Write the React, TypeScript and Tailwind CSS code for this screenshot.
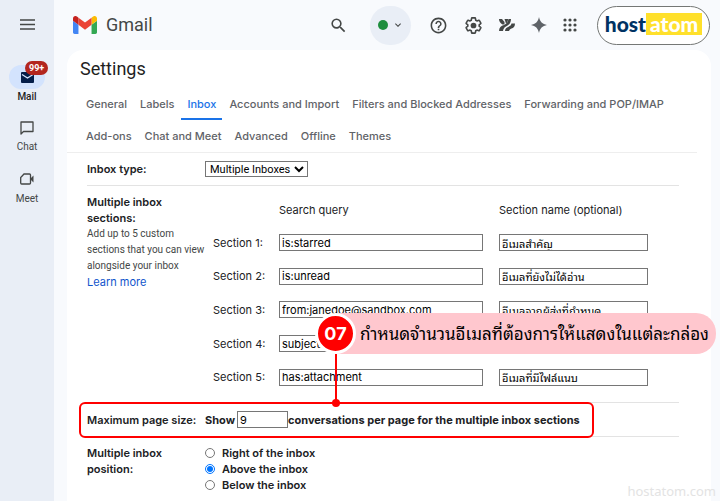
import type { ReactNode } from "react";
import { MdExpandMore, MdHelpOutline, MdSearch } from "react-icons/md";

const tabs = [
  "General",
  "Labels",
  "Inbox",
  "Accounts and Import",
  "Filters and Blocked Addresses",
  "Forwarding and POP/IMAP",
  "Add-ons",
  "Chat and Meet",
  "Advanced",
  "Offline",
  "Themes",
];

const sections = [
  { query: "is:starred", name: "อีเมลสำคัญ" },
  { query: "is:unread", name: "อีเมลที่ยังไม่ได้อ่าน" },
  { query: "from:janedoe@sandbox.com", name: "อีเมลจากผู้ส่งที่กำหนด" },
  { query: "subject:", name: "" },
  { query: "has:attachment", name: "อีเมลที่มีไฟล์แนบ" },
];

const positions = ["Right of the inbox", "Above the inbox", "Below the inbox"];

const GmailLogo = () => (
  <svg className="h-[18px] w-6" viewBox="52 42 88 66" aria-hidden="true">
    <path fill="#4285f4" d="M58 108h14V74L52 59v43c0 3.32 2.69 6 6 6" />
    <path fill="#34a853" d="M120 108h14c3.32 0 6-2.69 6-6V59l-20 15" />
    <path fill="#fbbc04" d="M120 48v26l20-15v-8c0-7.42-8.47-11.65-14.4-7.2" />
    <path fill="#ea4335" d="M72 74V48l24 18 24-18v26L96 92" />
    <path fill="#c5221f" d="M52 51v8l20 15V48l-5.6-4.2c-5.94-4.45-14.4-.22-14.4 7.2" />
  </svg>
);

const MenuIcon = () => (
  <svg className="h-[11px] w-[15px]" viewBox="0 0 15 11" stroke="#444746" strokeWidth="1.5" aria-hidden="true">
    <path d="M0 1h15M0 5.500h15M0 10h15" />
  </svg>
);

const GearIcon = () => (
  <svg className="h-[19px] w-[19px]" viewBox="0 0 24 24" aria-hidden="true">
    <path
      fill="none"
      stroke="#444746"
      strokeWidth="2"
      strokeLinejoin="round"
      d="M19.14 12.94c.04-.3.06-.61.06-.94 0-.32-.02-.64-.07-.94l2.03-1.58c.18-.14.23-.41.12-.61l-1.92-3.32c-.12-.22-.37-.29-.59-.22l-2.39.96c-.5-.38-1.03-.7-1.62-.94l-.36-2.54c-.04-.24-.24-.41-.48-.41h-3.84c-.24 0-.43.17-.47.41l-.36 2.54c-.59.24-1.13.57-1.62.94l-2.39-.96c-.22-.08-.47 0-.59.22L2.74 8.87c-.12.21-.08.47.12.61l2.03 1.58c-.05.3-.09.63-.09.94s.02.64.07.94l-2.03 1.58c-.18.14-.23.41-.12.61l1.92 3.32c.12.22.37.29.59.22l2.39-.96c.5.38 1.03.7 1.62.94l.36 2.54c.05.24.24.41.48.41h3.84c.24 0 .44-.17.47-.41l.36-2.54c.59-.24 1.13-.56 1.62-.94l2.39.96c.22.08.47 0 .59-.22l1.92-3.32c.12-.22.07-.47-.12-.61l-2.01-1.58z"
    />
    <circle cx="12" cy="12" r="3.6" fill="#444746" />
  </svg>
);

const PinwheelIcon = () => (
  <svg className="h-4 w-4" viewBox="0 0 16 16" fill="#444746" aria-hidden="true">
    <path d="M0 2h3L5.500 5V7.500H3.500C1.500 6.500 0 4.500 0 2z" />
    <path d="M5.500 2H9c0 2-.7 3.500-2 4.500C6.500 5 6 3.500 5.500 2z" />
    <path d="M9.500 2H12c0 4-2 6-5 7.500C5 10.500 4.500 12 4 14H0C0 10.500 2 9 5 8c2.500-1 4-3 4.500-6z" />
    <path d="M12.500 6.500H16c0 3-1.500 4.500-3.500 5C11 12 10.500 13 10 14H6c0-2.500 1.500-3.500 3.500-4.300 1.800-.7 2.700-1.700 3-3.200z" />
  </svg>
);

const SparkIcon = () => (
  <svg className="h-4 w-4" viewBox="0 0 16 16" fill="#5f6368" aria-hidden="true">
    <path d="M8 0C8.800 4.500 11.500 7.200 16 8 11.500 8.800 8.800 11.500 8 16 7.200 11.500 4.500 8.800 0 8 4.500 7.200 7.200 4.500 8 0z" />
  </svg>
);

const AppsIcon = () => (
  <svg className="h-[14px] w-[14px]" viewBox="0 0 14 14" fill="#444746" aria-hidden="true">
    {[2, 7, 12].map((y) => [2, 7, 12].map((x) => <circle key={`${x}-${y}`} cx={x} cy={y} r="1.6" />))}
  </svg>
);

const MailIcon = () => (
  <svg className="h-[11px] w-[13px]" viewBox="0 0 13 11" aria-hidden="true">
    <rect width="13" height="11" rx="1" fill="#041e49" />
    <path d="M1 2.500l5.500 3.500L12 2.500" fill="none" stroke="#d3e3fd" strokeWidth="1.3" />
  </svg>
);

const ChatIcon = () => (
  <svg className="h-[14px] w-[14px]" viewBox="0 0 14 14" fill="none" stroke="#444746" strokeWidth="1.3" aria-hidden="true">
    <path d="M1 13V1h12v9.500H3.500z" strokeLinejoin="round" />
  </svg>
);

const MeetIcon = () => (
  <svg className="h-3 w-[14px]" viewBox="0 0 14 12" aria-hidden="true">
    <path d="M4 1h5.500a1 1 0 0 1 1 1v8a1 1 0 0 1-1 1H1.700a1 1 0 0 1-1-1V4.500z" fill="none" stroke="#444746" strokeWidth="1.3" />
    <path d="M10.500 5.500 13.500 2.500v7l-3-3z" fill="#444746" />
  </svg>
);

interface SettingRowProps {
  label: ReactNode;
  children: ReactNode;
}

const SettingRow = ({ label, children }: SettingRowProps) => (
  <div className="flex items-center border-b border-[#e3e3e3] py-2">
    <div className="w-[118px] shrink-0 font-semibold">{label}</div>
    <div className="min-w-0 flex-1">{children}</div>
  </div>
);

const Sidebar = () => (
  <nav className="flex w-[54px] shrink-0 flex-col items-center bg-[#e9eef6] pt-[19px] font-[Roboto,sans-serif] text-[10px] leading-3 text-[#444746]">
    <button aria-label="Main menu" className="mb-[35px]">
      <MenuIcon />
    </button>
    <a href="#mail" className="relative flex flex-col items-center gap-0.5 font-medium text-[#1f1f1f]">
      <span className="flex h-6 w-9 items-center justify-center rounded-full bg-[#d3e3fd]">
        <MailIcon />
      </span>
      Mail
      <span className="absolute -top-1 left-4 rounded-full bg-[#b3261e] px-1 text-[9px] leading-[14px] font-bold text-white">
        99+
      </span>
    </a>
    <a href="#chat" className="mt-[18px] flex flex-col items-center gap-1.5">
      <ChatIcon />
      Chat
    </a>
    <a href="#meet" className="mt-5 flex flex-col items-center gap-2">
      <MeetIcon />
      Meet
    </a>
  </nav>
);

const Header = () => (
  <header className="flex h-[50px] items-center pr-[10px] pl-[19px] text-[#444746]">
    <GmailLogo />
    <span className="ml-[9px] font-[Roboto,sans-serif] text-[18px] leading-6">Gmail</span>
    <div className="ml-auto flex items-center">
      <button aria-label="Search" className="mr-[22px]">
        <MdSearch className="h-[19px] w-[19px]" />
      </button>
      <button
        aria-label="Status: active"
        className="mr-[18px] flex h-[39px] w-[41px] items-center justify-center gap-1 rounded-full bg-[#e9eef6]"
      >
        <span className="h-[10px] w-[10px] rounded-full bg-[#1e8e3e]" />
        <MdExpandMore className="h-3 w-3" />
      </button>
      <button aria-label="Support" className="mr-4">
        <MdHelpOutline className="h-[19px] w-[19px]" />
      </button>
      <button aria-label="Settings" className="mr-4">
        <GearIcon />
      </button>
      <button aria-label="Add-ons" className="mr-4">
        <PinwheelIcon />
      </button>
      <button aria-label="Gemini" className="mr-4">
        <SparkIcon />
      </button>
      <button aria-label="Google apps" className="mr-5">
        <AppsIcon />
      </button>
      <button className="flex h-[39px] w-[113px] items-center justify-center rounded-full border border-[#747775] bg-white pb-[2px] font-[Lato] text-[21px] leading-[22px] font-black text-[#003263]">
        host<span className="bg-[#ffe02b] px-1 text-white">atom</span>
      </button>
    </div>
  </header>
);

const inputClass = "h-[17px] rounded-none border border-[#767676] bg-white px-[2px] text-[11px] text-black";

const InboxSections = () => (
  <div className="flex border-b border-[#e3e3e3] py-2">
    <div className="w-[126px] shrink-0">
      <div className="w-24 font-semibold">Multiple inbox sections:</div>
      <p className="w-[124px] font-[Roboto,sans-serif] text-[10px] leading-4 text-[#444746]">
        Add up to 5 custom sections that you can view alongside your inbox
      </p>
      <a href="#learn" className="text-[#1155cc]">
        Learn more
      </a>
    </div>
    <div className="flex-1 pt-2">
      <div className="grid grid-cols-[66px_220px_149px]">
        <span className="col-start-2">Search query</span>
        <span>Section name (optional)</span>
      </div>
      <div className="mt-2 grid h-[168px] auto-rows-fr grid-cols-[66px_220px_149px] items-center">
        {sections.map(({ query, name }, i) => (
          <div key={query} className="contents">
            <label htmlFor={`query-${i}`}>Section {i + 1}:</label>
            <input id={`query-${i}`} defaultValue={query} className={`${inputClass} w-[204px]`} />
            <input aria-label={`Section ${i + 1} name`} defaultValue={name} className={`${inputClass} w-full`} />
          </div>
        ))}
      </div>
    </div>
  </div>
);

const Callout = () => (
  <>
    <div className="absolute -top-px -left-2 h-9 w-[515px] rounded-md border-2 border-[#ff0000]" />
    <div className="absolute bottom-[83px] left-[231px] flex h-[41px] w-[398px] items-center rounded-[20px] bg-[#ffc7ce] pl-[42px] text-[17px] whitespace-nowrap text-black">
      กำหนดจำนวนอีเมลที่ต้องการให้แสดงในแต่ละกล่อง
      <span className="absolute -left-[3px] flex h-[41px] w-[41px] items-center justify-center rounded-full border-[3px] border-white bg-[#ff0000] text-[18px] font-bold text-white">
        07
      </span>
      <span className="absolute top-[41px] left-[17px] h-[49px] w-[2px] bg-[#ff0000]" />
      <span className="absolute top-[86px] left-[14px] h-2 w-2 rounded-full bg-[#ff0000]" />
    </div>
  </>
);

export default function App() {
  return (
    <div className="relative flex min-h-screen bg-[#f8fafd] font-[Inter,'Noto_Sans_Thai_Looped','Noto_Sans_Thai',sans-serif] text-[11px] leading-4 text-[#202124]">
      <Sidebar />
      <div className="min-w-0 flex-1">
        <Header />
        <main className="mr-[9px] ml-[13px] min-h-[451px] rounded-t-2xl bg-white pt-[7px]">
          <h1 className="ml-[13px] font-[Roboto,sans-serif] text-[18px] leading-6 text-[#1f1f1f]">Settings</h1>
          <nav className="mt-[7px] mr-[14px] flex flex-wrap gap-x-px border-b border-[#eeeeee] pl-[13px] font-medium text-[#5f6368]">
            {tabs.map((tab) => (
              <a
                key={tab}
                href="#settings"
                className={
                  tab === "Inbox"
                    ? "h-8 border-b-2 border-[#1a73e8] px-1.5 leading-8 text-[#1a73e8]"
                    : "h-8 px-1.5 leading-8"
                }
              >
                {tab}
              </a>
            ))}
          </nav>

          <div className="mr-8 ml-5">
            <SettingRow label={<label htmlFor="inbox-type">Inbox type:</label>}>
              <select
                id="inbox-type"
                className="block h-4 w-[103px] rounded-none border border-[#767676] bg-white font-[Roboto,sans-serif] text-[11px] text-black"
              >
                <option>Multiple Inboxes</option>
              </select>
            </SettingRow>

            <InboxSections />

            <div className="relative">
              <SettingRow label={<label htmlFor="page-size">Maximum page size:</label>}>
                <div className="flex items-center font-bold whitespace-nowrap">
                  Show
                  <input
                    id="page-size"
                    defaultValue="9"
                    className="ml-0.5 h-[17px] w-[51px] border border-[#767676] px-[2px] font-normal text-black"
                  />
                  conversations per page for the multiple inbox sections
                </div>
              </SettingRow>
              <Callout />
            </div>

            <div className="flex pt-2 font-semibold">
              <div id="position-label" className="w-[118px] shrink-0 pr-7">
                Multiple inbox position:
              </div>
              <div role="radiogroup" aria-labelledby="position-label">
                {positions.map((position) => (
                  <label key={position} className="flex items-center">
                    <input
                      type="radio"
                      name="position"
                      defaultChecked={position === "Above the inbox"}
                      className="mr-[7px] h-[10px] w-[10px]"
                    />
                    {position}
                  </label>
                ))}
              </div>
            </div>
          </div>
        </main>
      </div>
      <div className="absolute right-1 bottom-0 font-['Noto_Sans'] text-[13px] leading-5 text-[#e3e3e3]">hostatom.com</div>
    </div>
  );
}
